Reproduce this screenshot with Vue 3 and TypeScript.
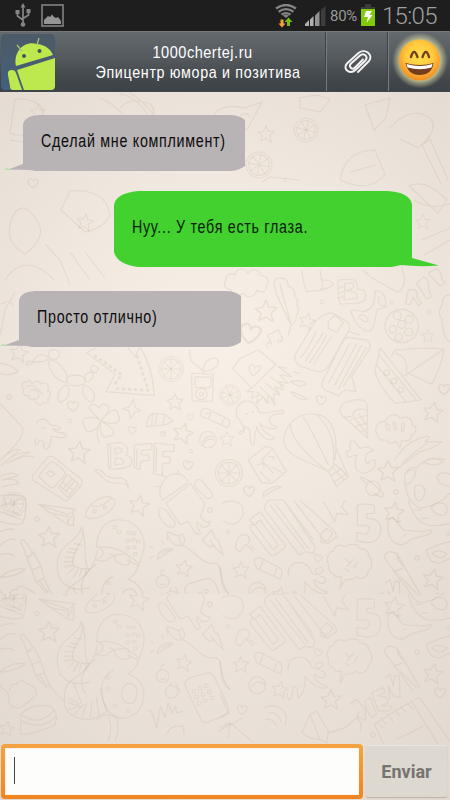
<script setup lang="ts">
interface Message {
  id: number
  text: string
  kind: 'in' | 'out'
  slot: string
}

const messages: Message[] = [
  { id: 1, text: 'Сделай мне комплимент)', kind: 'in', slot: 'first' },
  { id: 2, text: 'Нуу... У тебя есть глаза.', kind: 'out', slot: 'second' },
  { id: 3, text: 'Просто отлично)', kind: 'in', slot: 'third' },
]

// Small repeated doodles: x, y, scale, rotation
type Spot = [number, number, number, number]

const stars: Spot[] = [
  [19, 353, 1, 10], [175, 402, 0.9, 0], [183, 433, 1.1, 15], [79, 452, 1.2, 5],
  [139, 505, 1.1, 12], [49, 537, 1.15, 0], [184, 568, 0.9, 10], [227, 439, 0.8, 0],
  [266, 311, 1.2, 0], [307, 321, 0.9, 15], [428, 336, 0.7, 0], [433, 412, 1.1, 10],
  [388, 471, 1.15, 0], [241, 570, 0.9, 0], [394, 512, 1.1, 10],
  [433, 579, 1.1, 10], [280, 595, 0.9, 10], [331, 605, 1.1, 0], [7, 634, 0.8, 10],
  [266, 134, 0.9, 0], [85, 222, 0.9, 10], [38, 112, 0.8, 0], [423, 222, 0.8, 0],
]
const hearts: Spot[] = [
  [73, 406, 1.1, 0], [190, 417, 0.7, 0], [132, 430, 0.8, 10], [188, 465, 1, 10],
  [321, 400, 1, 10], [250, 333, 2, 10], [444, 389, 1.1, 0], [318, 558, 0.8, 15],
  [249, 491, 1.1, 0], [33, 183, 1, 0], [440, 598, 1.1, 0], [242, 615, 1, 0],
]
const wheels: Spot[] = [
  [171, 369, 1.25, 0], [230, 395, 1.05, 20], [229, 473, 1.35, 0], [259, 165, 1.3, 10],
  [14, 504, 1.2, 0], [306, 130, 1.2, 15],
]
const dots: Spot[] = [
  [9, 397, 1, 0], [70, 421, 0.8, 0], [163, 434, 0.9, 0], [191, 451, 0.7, 0],
  [37, 519, 0.9, 0], [210, 510, 1, 0], [322, 302, 0.8, 0], [392, 303, 0.6, 0],
  [429, 312, 0.8, 0], [396, 492, 1, 0], [228, 532, 0.8, 0], [417, 558, 0.9, 0],
  [448, 534, 0.8, 0], [373, 640, 0.9, 0], [52, 168, 0.8, 0], [285, 180, 0.7, 0],
]
const place = (s: Spot): string => `translate(${s[0]} ${s[1]}) rotate(${s[3]}) scale(${s[2]})`
</script>

<template>
  <div class="phone">
    <svg class="wallpaper" viewBox="0 0 450 800" aria-hidden="true">
      <defs>
        <radialGradient id="paper" gradientUnits="userSpaceOnUse" cx="225" cy="345" r="330">
          <stop offset="0" stop-color="#f8f0e7" />
          <stop offset=".5" stop-color="#f1e9e0" />
          <stop offset="1" stop-color="#e5dcd3" />
        </radialGradient>
        <radialGradient id="paperLow" gradientUnits="userSpaceOnUse" cx="225" cy="580" r="330">
          <stop offset="0" stop-color="#eee5dc" />
          <stop offset=".6" stop-color="#e7ded5" />
          <stop offset="1" stop-color="#dfd6cd" />
        </radialGradient>
        <clipPath id="upper"><rect x="0" y="92" width="450" height="502" /></clipPath>
        <clipPath id="lower"><rect x="0" y="594" width="450" height="206" /></clipPath>
        <path id="star" d="M0-9 2.5-3 9-3 4 2 6 9 0 5-6 8-4 2-9-2-3-3Z" />
        <path id="heart" d="M0 5C-6 1-6-3-3-4-1-5 0-3 0-2 2-5 6-4 5-1 4 2 2 4 0 5Z" />
        <g id="wheel" stroke-width=".75">
          <circle r="10" /><circle r="8" /><path d="M-8 0H8M0-8V8M-6-6 6 6M-6 6 6-6" />
        </g>
        <g id="doodles">
          <use v-for="(s, i) in stars" :key="`s${i}`" href="#star" :transform="place(s)" />
          <use v-for="(s, i) in hearts" :key="`h${i}`" href="#heart" :transform="place(s)" />
          <use v-for="(s, i) in wheels" :key="`w${i}`" href="#wheel" :transform="place(s)" />
          <circle v-for="(s, i) in dots" :key="`d${i}`" r="2.4" :transform="place(s)" />

          <!-- left: balloon dog, arrow, player, clover, phone, android -->
          <g transform="translate(0 340) scale(.3333)" stroke-width="3.6">
            <path d="M145 52C120 32 100 55 98 70 80 82 75 72 82 65 95 60 130 75 147 55M145 45C145 20 185 25 178 48 170 63 148 60 145 45M148 60C170 55 215 105 198 127 170 125 140 85 148 60M200 112C220 100 255 105 257 120 258 140 205 145 200 125ZM198 135C215 145 208 180 180 187 165 175 180 142 198 135M252 135C285 145 290 175 275 186 250 180 242 150 252 135M253 122C250 100 280 85 280 105 278 120 262 128 253 122M277 95C260 75 290 70 295 86 294 98 280 100 277 95" />
            <path d="M260 38 346 103 317 155 463 167C460 110 445 60 420 20L405 50 383 22M260 38 290 22" />
            <path d="M286 48 365 104 338 142M352 146 445 151 412 50" stroke-dasharray="2 16" stroke-width="9" stroke-linecap="round" />
            <path d="M575 105Q575 98 585 100L635 102Q641 103 640 110L638 180Q637 184 630 184L582 183Q575 183 576 175ZM586 110 633 112Q636 140 628 143L587 142Q582 120 586 110ZM608 100C612 50 650 45 655 65 657 85 610 105 600 85 590 70 565 75 570 30" />
            <circle cx="604" cy="162" r="17" /><circle cx="604" cy="162" r="6" />
            <path d="M85 125C65 125 62 140 72 145 62 158 75 172 85 165 88 180 100 182 104 175 112 200 125 198 128 188 140 195 148 185 143 175 157 165 152 155 143 153 150 130 134 125 125 132 115 120 98 124 96 132 90 115 80 120 85 125M92 152C110 140 125 168 110 177M78 140C98 128 118 150 128 165" />
            <path d="M303 242C290 230 255 228 248 240 245 255 258 257 256 268 262 285 295 270 303 242M303 242C285 225 260 205 270 196 280 190 292 195 297 205 303 190 320 190 327 200 330 215 315 230 303 242M303 242C315 225 335 205 350 212 358 218 350 225 358 230 364 250 335 258 303 242M303 242C325 255 347 270 340 283 335 292 325 285 320 292 305 295 297 270 303 242 290 262 288 285 298 308" />
            <path d="M110 250C115 232 140 235 148 250 152 262 165 250 183 263 180 272 165 270 158 265 165 285 190 270 200 287 190 300 165 290 155 288 150 325 138 338 130 320 140 305 120 300 118 300 114 320 100 322 108 295 115 280Z" /><path d="M122 252h2M135 252h2M124 262Q132 270 138 261" />
            <path d="M401 177 406 202 422 212 405 216 391 237 387 212 367 207 388 201ZM440 260Q442 225 458 220L496 224 520 243 494 255ZM458 222 455 256M470 224 466 256M494 224 490 254" />
            <path d="M603 226Q600 207 618 205L680 235Q698 245 682 263L620 235Q605 232 603 226M634 212 625 237M675 232 663 257M616 220h12" />
            <circle cx="624" cy="299" r="25" /><path d="M607 307Q620 280 642 292M607 315Q622 290 643 300" />
            <path d="M323 312 360 307Q395 320 378 345 400 350 394 375 382 388 326 387ZM323 312 332 318 332 380 326 387M345 325Q370 320 365 336L345 342ZM345 355Q375 350 370 372L346 374ZM403 315 455 310 456 328 425 332 423 344 448 345 447 360 422 364 420 388 403 383ZM463 309 522 315 522 334 490 334 488 350 512 352 510 369 488 371 486 408 460 400ZM470 320 467 396M411 325 410 380" />
            <path d="M97 408 142 353Q155 343 167 356L240 415Q253 426 242 438L203 480Q195 488 184 475L106 425Q94 418 97 408ZM116 408 145 372Q155 362 165 369L190 390Q200 400 190 410L163 440Q155 448 146 438ZM176 445 202 403 236 432 203 472ZM187 448 216 417M195 456 224 423M187 426 218 450M178 438 210 463M140 398 150 392 165 402 150 411Z" />
            <path d="M282 390Q305 385 317 407 340 418 360 412 386 420 386 446 380 425 355 430 325 430 310 415 300 400 282 390M257 530C255 505 285 475 320 470 340 470 350 485 342 497 325 525 280 545 257 530M273 495C290 510 320 490 336 472M280 510h8v8h-8zM310 498h8v8h-8z" />
            <path d="M115 493 228 508 203 524ZM115 493 203 554 220 557 222 523M203 524 203 550 220 518M140 516 202 530" />
            <path d="M488 480C465 450 495 405 520 402 550 400 565 418 562 430ZM497 412 485 402M537 403 533 390M483 438 463 441M520 430v1M535 425v1M498 490 572 431 615 492Q605 515 602 530 615 550 630 545 628 565 605 560L592 546Q585 550 602 580 590 590 580 570L565 545 540 554ZM585 440Q580 415 604 420L637 460Q638 478 620 475ZM475 510Q480 498 497 510L526 548Q525 566 505 560Q475 538 475 510" />
            <path d="M0 467Q65 460 77 475 83 510 68 550 45 558 0 545M0 500Q30 480 77 477M10 470 22 500M35 470 28 498M55 470 35 500M0 515 65 540M28 510 65 528M0 360Q45 320 58 330L5 375Q45 335 90 336L20 370 Q80 340 102 352M0 410Q35 390 55 407L5 420 Q50 412 55 430L5 440M0 190 65 260Q85 285 0 360M0 575Q30 562 45 570M0 615Q30 590 47 600M0 645Q30 635 43 650M0 713Q35 680 77 688 50 710 0 713" />
            <path d="M0 70Q40 75 55 95 20 112 0 98" />
          </g>

          <!-- octopus, syringe, wires -->
          <g transform="translate(0 500) scale(.3333)" stroke-width="3.6">
            <path d="M290 143C290 80 325 55 365 60 415 65 440 110 430 155L416 198 380 180M290 143Q350 130 416 190M290 138Q330 160 288 180 300 185 320 182 340 160 380 162 400 190 380 195 345 195 342 165L328 160M245 80C265 125 245 190 268 210 280 200 290 165 292 150M245 80C235 130 165 130 172 205 175 265 230 275 270 262M245 80C260 130 215 145 218 190 222 210 270 205 270 210M290 192C240 225 235 270 258 300M417 195 405 220 385 238Q440 260 430 315 420 365 370 372 310 365 305 290 305 240 340 230" />
            <path d="M193 325C190 240 230 270 270 205M193 325C200 380 280 390 320 350 315 320 300 310 303 280M245 327 220 265M208 310l30 20M205 325l30 8M205 345l38-10M222 362l30-34M245 370l15-45M270 370l6-50M298 365l-10-58M365 305C360 250 420 260 410 300 405 340 370 330 365 305Z" />
            <path d="M193 200 220 195M192 185 220 185M195 170 222 174M200 155 228 160M208 145 235 150M222 130 245 135M205 220 225 200M220 232 235 206M238 230 245 206M258 226 256 206" />
            <path d="M340 77h10v8h-10zM352 92h10v8h-10zM380 94h10v8h-10zM396 96h10v8h-10zM378 118h10v8h-10zM395 115h10v8h-10zM410 120h10v8h-10zM378 140h10v8h-10zM398 138h10v8h-10zM400 158h10v8h-10zM320 245h10v8h-10zM320 280h10v8h-10zM340 330h10v8h-10zM380 345h10v8h-10z" stroke-width="2.6" />
            <path d="M62 125Q65 115 73 122L97 155 92 168 82 173ZM80 172 102 158 123 200 95 210ZM95 210 123 200 133 235 108 245ZM108 245 133 235 150 275 190 320M108 245 140 280M116 240 145 278" />
            <path d="M500 95C515 150 560 145 553 115 545 85 530 110 545 135 580 145 595 185 630 190 665 185 660 205 665 240 665 270 690 285 690 285M540 110 500 95M472 178Q475 140 520 147ZM482 162Q500 150 520 150M485 120 490 133M500 105 503 122M460 145 450 140M462 168 450 175M607 120 635 90 645 115 655 120 670 165 637 135 630 142ZM630 120 645 140" />
            <circle cx="488" cy="245" r="19" /><circle cx="515" cy="292" r="19" />
            <path d="M480 240v1M494 240v1M480 252Q490 258 496 250M485 225Q480 205 495 212M510 273 515 262M540 290 525 260M445 350Q450 340 460 365L470 400 482 335 495 370 505 325 515 355 527 335 530 355 550 350" />
            <path d="M556 275Q550 260 570 250L620 236Q637 235 645 250L685 340Q690 355 675 362L620 385Q607 385 603 375Z" />
            <path d="M577 285h10v10h-10zM595 277h10v10h-10zM614 269h10v10h-10zM584 303h10v10h-10zM603 295h10v10h-10zM622 287h10v10h-10zM592 321h10v10h-10zM611 313h10v10h-10zM630 305h10v10h-10z" stroke-width="2.6" />
            <path d="M25 320C30 275 5 295 0 270M25 320Q40 350 68 335 90 320 110 300 110 275 78 265 55 250 50 270 30 265 28 290M62 360Q95 325 150 335 178 355 165 390 110 420 62 420ZM62 360Q120 400 165 345M65 380Q130 410 168 365M290 375Q320 350 350 370 360 410 345 440M325 360Q340 400 325 440M500 420Q510 390 550 395L552 420M655 410 730 370" />
          </g>

          <!-- right: quill, message bubbles, boat, balloon, squid -->
          <g transform="translate(220 260) scale(.3333)" stroke-width="3.6">
            <path d="M15 70C15 45 30 35 45 45 50 20 80 25 82 40 100 20 120 30 120 45 145 50 150 65 138 75 145 95 125 100 110 90 105 115 80 115 70 100 45 115 30 100 35 90Q10 85 15 70M205 225 213 195M213 195Q165 100 162 70 165 50 185 55 205 55 205 80 225 80 225 110 237 120 230 135 242 150 230 165 228 190 213 195L180 72M245 30Q250 70 260 95L310 90 300 30M300 60Q340 60 340 75 320 90 300 85M430 30 450 50 530 95Q545 100 555 60L540 0M355 60Q350 100 360 132L410 130Q445 125 435 95 425 85 412 88 415 55 385 58ZM375 70 372 120 410 115Q420 95 375 92 405 90 400 70ZM356 85 373 78M356 100 373 93M356 115 373 108" />
            <path d="M145 265C130 250 155 240 155 255L143 225 175 210 188 237C180 255 165 245 177 237M393 155Q390 145 430 155 460 150 465 110 460 85 480 95 500 105 498 140L470 150Q465 200 450 215 410 210 393 155ZM415 170Q430 155 445 180 438 195 415 170M477 110Q470 140 495 138" />
            <circle cx="545" cy="198" r="50" /><circle cx="545" cy="193" r="12" /><circle cx="532" cy="167" r="12" /><circle cx="568" cy="178" r="12" /><circle cx="566" cy="216" r="12" /><circle cx="536" cy="232" r="11" /><circle cx="518" cy="208" r="11" />
            <path d="M557 130 565 90Q600 85 590 110L605 130 595 137 580 112 570 135ZM590 70 612 50Q630 60 625 85L635 110 620 117ZM625 40 650 25Q668 40 665 55L675 70 660 78Z" />
            <path d="M225 285 285 185Q315 155 340 160L382 185Q395 200 385 215L325 320Q310 340 285 333L240 318Q220 305 225 285ZM325 185 345 165 370 188 350 218 325 205ZM240 295Q270 260 288 215M255 305 310 218M267 310Q300 265 320 225M280 315 335 228M385 232 440 240Q455 250 450 265L395 350 408 395 375 390 355 407 315 390Q300 378 310 360L360 260Q375 230 385 232M390 250 325 370M410 250 345 375M425 255 355 388M440 262 370 380M385 215 420 225" />
            <path d="M38 325 60 295 115 270 168 313 95 385ZM90 335C80 310 105 310 105 325 120 305 135 325 98 348ZM95 385 80 395 100 395 95 415 115 405 110 430 130 410 140 430 145 405 165 435 160 400 180 405 165 380 190 390 175 365 205 370 180 345 215 350 175 320 200 325M110 395 150 430M120 380 160 420M135 368 175 400M150 350 195 380M210 365Q255 358 258 373 240 385 210 365M212 395Q235 400 262 418 235 425 212 395M220 335 240 340" />
            <path d="M480 262 465 335Q475 375 525 430L603 420 480 262M477 285 590 422M470 315 560 428M515 290Q520 265 540 270 600 260 672 267 665 320 635 373L565 340 672 267M525 280Q565 285 560 345L550 345" /><circle cx="500" cy="338" r="8" /><circle cx="522" cy="363" r="8" /><circle cx="543" cy="389" r="8" />
            <path d="M50 470C40 420 100 405 115 450 120 470 155 450 190 452 200 460 175 465 175 460 130 470 150 495 170 500 165 515 125 500 120 490 125 520 155 525 165 535 130 555 105 495 112 500 95 540 110 555 98 555 85 555 100 500 75 500 70 530 55 525 58 515 80 515 70 490 50 470M75 465l10-5M95 455l8 0" />
            <path d="M365 465C350 440 375 425 390 423 420 415 440 420 442 435L443 535 365 465M370 470Q390 475 400 465 400 440 440 450M390 480 443 465M405 500 443 488M425 515 443 505M400 470 443 525M415 460 443 500" />
            <path d="M325 635C260 600 192 590 192 540 195 480 250 455 290 463 340 470 355 530 345 600M212 490Q205 540 318 630M250 470Q280 520 325 615M290 463Q350 520 340 612M325 635 345 612 385 650 350 680ZM335 620 372 660M330 650 365 625M345 665 380 640M385 650 345 555" />
            <path d="M400 540Q385 540 392 570L378 575 385 592 410 585Q395 635 430 640 470 635 465 600 445 600 445 610 430 610 440 580L460 572 445 560 420 565ZM470 520C460 500 480 480 495 485 505 460 530 460 540 475 565 465 580 480 575 495 595 500 590 520 575 525 575 545 555 545 545 540L540 565 530 545Q505 555 500 540 475 545 470 520M497 490Q510 490 510 512 498 515 497 490M520 485Q530 485 528 510 518 510 520 485M548 488Q558 485 550 515 540 515 548 488" />
            <path d="M525 600Q555 545 615 530 640 525 615 545 640 545 665 545 645 565 600 575L535 625M545 610 625 545" /><circle cx="459" cy="685" r="22" /><path d="M440 670C400 645 430 640 490 700 495 720 470 705 460 700" />
            <path d="M85 600 135 560Q155 560 160 570L200 635 155 670 125 668ZM125 600 160 640M125 600 155 570M110 615 130 610 132 625M145 590 160 590 160 600M120 635 150 665M155 620 190 640M555 640Q570 615 590 625 620 585 680 600M555 640Q550 720 600 745 650 740 690 700M560 640Q570 620 588 635 580 665 560 675M610 605Q640 585 670 605 645 625 610 605M650 650Q665 630 695 645M650 650 660 670 690 680M585 680Q605 665 615 690 610 730 590 720Q580 700 585 680" />
            <path d="M690 105Q665 105 668 130 650 160 665 175 670 240 690 245M130 700Q155 675 185 680 160 690 130 710Z" />
          </g>

          <!-- lower right: stripes, five, chili, speech cloud, pen, notebook -->
          <g transform="translate(220 500) scale(.3333)" stroke-width="3.6">
            <path d="M88 60 120 35 195 135Q198 145 185 150L165 165Q155 170 148 160L92 90Q85 70 105 75ZM105 75 120 60 175 135 160 150 105 75M135 30Q130 10 150 0L190 0 285 140 280 160 255 155 240 165 230 155ZM150 15 255 150M165 10 265 145M190 0 280 120M220 0 320 130M240 0 345 95 350 110 325 130 300 125M300 105 320 85 338 100 325 122 305 120ZM310 5 345 65 350 40 385 45 365 20 375 0" />
            <path d="M412 15Q440 10 462 15L464 40 440 42 440 55Q485 55 482 90 480 128 440 128L410 122 410 98 440 103 450 85 440 75 412 78ZM422 25h2M445 25h2M425 60h2M455 70h2M465 90h2M450 110h2" />
            <path d="M505 90Q500 50 520 55L550 90 605 95 635 90Q635 105 600 110L570 120Q545 145 520 125 505 110 505 90M530 65l15-2M550 110l10-10M565 0Q580 60 620 75 660 80 690 70M582 30h25M605 55h20M633 25Q640 5 670 10 690 25 675 45 650 50 633 25" />
            <path d="M325 190C315 175 330 150 340 155 345 130 365 135 375 140 390 130 415 130 418 145 440 145 448 160 445 165 460 180 458 205 445 210 445 235 420 240 410 230 395 245 375 235 375 240L360 265 365 230Q345 235 340 220 325 220 325 190M375 175 390 190M400 178 380 200M415 185 400 205M375 205 388 215" />
            <path d="M495 175Q490 160 510 155L530 160 600 280M495 175 575 285M520 215 548 205M530 160 535 180 560 210M540 230 590 280M620 150Q660 130 690 125M620 150Q625 190 660 190L690 175M635 160Q650 145 680 160 665 185 635 160" />
            <path d="M50 125Q60 95 85 108 95 130 75 135L60 155 45 145ZM80 135 100 155M90 135 105 148M103 185Q105 170 125 175L180 205Q192 215 180 238L110 205ZM130 180 120 207M170 205 162 230M205 225C200 185 250 175 270 205 275 225 285 225 300 220 315 215 310 195 295 205 275 205 295 230 310 230 325 245 310 260 285 240 275 240 285 265 320 275 330 280 295 295 255 245 255 255 260 290 235 310 230 300 240 280 220 275 215 330 205 325 200 295 240 260 205 225" />
            <circle cx="112" cy="272" r="25" /><path d="M5 10Q40-5 65 15 80 55 45 72 20 75 10 60M0 200Q5 260 30 285M95 280Q110 250 135 270M0 300 25 355 0 370" />
            <path d="M390 335 410 320 440 355 435 325 450 315 470 365 455 375 435 345 437 385 410 370 420 355M455 300 490 285 495 300 475 310 500 315 505 330 485 340 515 340 510 355 475 355ZM495 255 510 245 520 280 525 250 538 250 540 315 520 310 505 280 510 320" transform="translate(0 -6)" />
            <path d="M463 388 575 320 685 500M463 388 510 490M470 385 490 400M480 370 500 390M500 358 520 380M520 345 540 365M540 335 560 355M560 325 580 345M585 315 600 310 690 440M530 435 610 395M245 415 270 360 290 350 325 410 320 445 300 435 270 430ZM270 360 300 435M325 415 375 400 410 370Q430 385 420 410M0 400 30 385 95 440M30 385 25 430M130 340Q180 320 200 365L195 395M145 355Q175 350 185 385M135 375Q160 370 170 395" />
          </g>

          <!-- top band -->
          <path d="M120 94Q150 98 165 160M130 93Q160 110 175 160M100 98Q130 110 145 155M120 108Q130 96 150 104 156 110 152 114M212 118Q220 102 245 108L262 102 248 128Q232 138 225 125 210 135 212 118M218 118Q225 112 230 120M240 116Q248 110 250 118M340 180Q345 150 375 150L385 174Q370 194 340 180M350 172 376 165M15 99Q50 98 42 125 28 140 10 133ZM10 140 38 144 30 172M262 182 270 177 300 180M390 128Q410 105 430 118 440 130 418 148L400 139M422 145 441 184M430 139 448 180M422 145 430 139M70 191Q105 188 110 214 105 228 85 232L61 210ZM85 252 105 278M70 252 90 280M15 212Q0 240 25 254 50 235 35 218 25 202 15 212M5 280Q25 250 54 280M45 244 60 260 70 285M414 200Q430 210 450 204M409 186Q425 178 447 200L438 213ZM422 240 450 228M424 255 450 240M15 292 5 310 0 335M2 304Q10 298 13 306M365 105 390 98 386 118 374 130ZM300 98Q318 92 330 100L320 112 300 108Z" stroke-width="1.1" />
        </g>
      </defs>
      <rect width="450" height="594" fill="url(#paper)" />
      <rect y="594" width="450" height="206" fill="url(#paperLow)" />
      <g class="ink" clip-path="url(#upper)"><use href="#doodles" /></g>
      <g clip-path="url(#lower)"><g class="ink ink--low" transform="translate(0 94.5)"><use href="#doodles" /></g></g>
    </svg>

    <div class="status">
      <svg class="usb" width="16" height="25" viewBox="0 0 16 25" fill="none" stroke="#858585" stroke-width="1.7">
        <path d="M8 3v18M2.500 8.500v4.500L8 17M13.500 8.500v3.500L8 15.500" />
        <path d="M8 0 10.500 4.500H5.500ZM0.500 7h4v4h-4zM11.500 6h4v4h-4z" fill="#858585" stroke="none" />
        <circle cx="8" cy="21.500" r="2.300" fill="#858585" stroke="none" />
      </svg>
      <svg class="photo" width="23" height="23" viewBox="0 0 23 23">
        <rect x="1" y="1" width="21" height="21" fill="none" stroke="#7d7d7d" stroke-width="1.700" />
        <path d="M3 20V16L7 12 9 13 11 10.500 13 13 15 14 17 13 20 17V20Z" fill="#959595" />
      </svg>
      <svg class="wifi" width="22" height="24" viewBox="0 0 22 24">
        <g fill="none" stroke="#858585" stroke-width="2.300">
          <path d="M1 4.500Q11-2.500 21 4.500M3.600 7.700Q11 2.500 18.400 7.700M6.500 10.600Q11 7.500 15.500 10.600" />
        </g>
        <path d="M8 11.500Q11 9.500 14 11.500L11 14Z" fill="#858585" />
        <path d="M5.500 15.500H8.500V19.500H10.500L7 23.500 3.500 19.500H5.500Z" fill="#f5a035" />
        <path d="M12 22H15V18H17.500L13.500 13.500 9.500 18H12Z" fill="#79bd0c" />
      </svg>
      <svg class="signal" width="21" height="21" viewBox="0 0 21 21">
        <path d="M0 20V18L4 14V20ZM5 20V13.500L8.500 10V20Z" fill="#b0b0b0" />
        <path d="M10 20V9.500L14.500 5V20Z" fill="#929292" /><path d="M16 20V4L20.500 0V20Z" fill="#3d3d3d" />
      </svg>
      <span class="percent">80%</span>
      <svg class="battery" width="16" height="23" viewBox="0 0 16 23">
        <rect x="5" width="6" height="4" fill="#3a3a3a" /><rect x="1" y="3" width="14" height="3" fill="#3a3a3a" />
        <rect x="1" y="5" width="14" height="17" fill="#82cb08" />
        <path d="M6 7H12L9.500 11H12.500L6.500 19 8 13H4Z" fill="#fff" />
      </svg>
      <time class="clock">15:05</time>
    </div>

    <header class="bar">
      <svg class="avatar" width="55" height="57" viewBox="0 0 55 57">
        <defs><linearGradient id="sky" x1="0" y1="0" x2="0" y2="1"><stop stop-color="#4d5a66" /><stop offset="1" stop-color="#42617c" /></linearGradient></defs>
        <rect x="1" y="1" width="54" height="56" rx="4" fill="url(#sky)" />
        <g fill="#bde94e">
          <path d="M16 33C13 18 25 7 37 11 46 12 51 17 53 22Z" />
          <path d="M17 37 55 25V53Q55 57 51 57H24ZM8 42Q7 37 12 37 15 37 16 40L22 57H13Q10 57 10 53Z" />
        </g>
        <path d="M22 18 17 12M37 12 39 5" stroke="#a5c76d" stroke-width="1.300" />
        <circle cx="24" cy="23" r="2" fill="#42545e" /><circle cx="39.500" cy="18" r="2" fill="#42545e" />
      </svg>
      <div class="title">
        <span class="title__name">1000chertej.ru</span>
        <span class="title__sub">Эпицентр юмора и позитива</span>
      </div>
      <button class="tool tool--clip" aria-label="Attach">
        <svg width="30" height="28" viewBox="0 0 30 28" fill="none" stroke="#f5f5f5" stroke-width="1.900" stroke-linecap="round">
          <path d="M8 14.500 17 6.500C21 3 26 8 22 12L12.500 21C7 26-1 20 4 14.500L15.500 4C22-1.500 31 6 26 12L15 23M8 14.500C5 17.500 9 21.500 12 18.500L20 10.500" />
        </svg>
      </button>
      <button class="tool tool--smile" aria-label="Emoji">
        <svg width="60" height="60" viewBox="0 0 60 60">
          <defs>
            <radialGradient id="glow"><stop offset=".65" stop-color="#f4f0a8" stop-opacity=".85" /><stop offset="1" stop-color="#d7dba8" stop-opacity="0" /></radialGradient>
            <radialGradient id="face" cx=".5" cy=".4" r=".62"><stop stop-color="#ffe052" /><stop offset=".55" stop-color="#ffc83c" /><stop offset="1" stop-color="#f28521" /></radialGradient>
          </defs>
          <circle cx="30" cy="28.500" r="28" fill="url(#glow)" /><circle cx="29.500" cy="28" r="20.500" fill="url(#face)" />
          <path d="M21 25Q24 15 27.500 25M32.500 25Q36 15 39 25" fill="none" stroke="#74421a" stroke-width="2.400" stroke-linecap="round" />
          <path d="M15.500 31Q30 35 43.500 31 42 43 29.500 43 18 43 15.500 31Z" fill="#753d20" />
          <path d="M16.500 32Q30 36 42.500 32L41.500 35.500Q30 39 17.500 35.500Z" fill="#fff" />
        </svg>
      </button>
    </header>

    <main class="chat">
      <article v-for="m in messages" :key="m.id" class="msg" :class="[`msg--${m.kind}`, `msg--${m.slot}`]">
        <svg v-if="m.kind === 'in'" class="shape" viewBox="0 0 241 56" preserveAspectRatio="none">
          <path d="M19 11Q19 1 35 0H226Q235 0 241 5V51Q234 56 226 56H34Q29 56 28 55L4 54.500 19 49Z" fill="#b8b4b5" />
          <path d="M0 54Q3 53 6 54L4 55Z" fill="#9bdf8b" />
        </svg>
        <svg v-else class="shape" viewBox="0 0 325 76" preserveAspectRatio="none">
          <path d="M0 14Q2 2 24 0H273Q295 1 298 13V67L325 74.500Q305 76 287 74L278 76H24Q3 73 0 61Z" fill="#42d12f" />
        </svg>
        <span class="msg__text">{{ m.text }}</span>
      </article>
    </main>

    <footer class="composer">
      <div class="field"><div class="field__inner"><i class="caret"></i></div></div>
      <button class="send">Enviar</button>
    </footer>
  </div>
</template>

<style>
body { margin: 0; background: #e8dfd6; }
</style>

<style scoped>
.phone { position: relative; width: 450px; height: 800px; overflow: hidden; display: flex; flex-direction: column; font-family: "Liberation Sans", Arial, sans-serif; }
.wallpaper { position: absolute; inset: 0; width: 450px; height: 800px; z-index: -1; }
.ink { fill: none; stroke: #80705f; stroke-opacity: .115; stroke-width: 1.2; stroke-linejoin: round; }
.ink--low { stroke-opacity: .09; }
svg { display: block; flex: none; }
button { border: 0; padding: 0; font: inherit; background: none; }

.status { height: 31px; flex: none; box-sizing: border-box; background: #1e1e1e; display: flex; align-items: flex-start; padding: 3px 0 0 15px; font-family: Roboto, sans-serif; color: #858585; }
.photo { margin: 1px 0 0 10px; }
.wifi { margin: 1px 0 0 211px; }
.signal { margin: 3px 0 0 8px; }
.percent { margin: 4px 0 0 4px; width: 29px; font-size: 15px; line-height: 18px; letter-spacing: -.3px; white-space: nowrap; color: #999; }
.battery { margin: 1px 0 0 1px; }
.clock { margin: 1px 0 0 6px; font-size: 24px; line-height: 24px; font-weight: 300; letter-spacing: -.7px; color: #a0a0a0; }

.bar { height: 61px; flex: none; box-sizing: border-box; border-top: 1px solid #74777b; border-bottom: 1px solid #42474b; display: flex; background: linear-gradient(#656a6f, #54595e 45%, #44494d 75%, #3d4246); }
.avatar { margin-top: 1px; }
.title { flex: 1; display: flex; flex-direction: column; align-items: center; padding: 11px 0 0 16px; color: #fff; white-space: nowrap; font-size: 17px; line-height: 20px; }
.title__name { letter-spacing: .6px; margin-left: 9px; transform: scaleX(.855); }
.title__sub { letter-spacing: .8px; transform: scaleX(.84); }
.tool { width: 62px; box-sizing: border-box; border-left: 1px solid #777c81; box-shadow: -1px 0 #3e4347; display: flex; justify-content: center; }
.tool--clip { padding-top: 17px; }
.tool--smile { overflow: hidden; }

.chat { flex: 1; display: flex; flex-direction: column; align-items: flex-start; }
.msg { position: relative; box-sizing: border-box; font-size: 18px; line-height: 20px; color: #0c0c0c; white-space: nowrap; }
.shape { position: absolute; inset: 0; width: 100%; height: 100%; }
.msg__text { position: relative; display: inline-block; letter-spacing: .9px; transform: scaleX(.793); transform-origin: 0 50%; }
.msg--in { width: 241px; height: 56px; padding: 16px 0 0 37px; }
.msg--out { width: 325px; height: 76px; padding: 26px 0 0 18px; color: #09220a; }
.msg--first { margin: 23px 0 0 4px; }
.msg--second { margin: 20px 0 0 114px; }
.msg--third { margin: 24px 0 0; }

.composer { height: 57px; flex: none; display: flex; align-items: flex-start; }
.field { width: 362px; height: 55px; margin: 1px 0 0 1px; box-sizing: border-box; padding: 4px; border-radius: 4px; background: linear-gradient(#f5a342, #f08521); }
.field__inner { height: 47px; box-sizing: border-box; background: #fdfdfb; padding: 9px 0 0 9px; box-shadow: inset 0 0 1px 1px #fff4e6; }
.caret { display: block; width: 1px; height: 27px; background: #444; }
.send { width: 81px; height: 52px; margin: 2px 0 0 3px; box-sizing: border-box; border-radius: 2px; background: #ddd8d0; border-top: 1px solid #e9e5df; box-shadow: 0 1px 1px #b9b3aa; font: 700 18px Roboto, sans-serif; color: #77736f; }
</style>
